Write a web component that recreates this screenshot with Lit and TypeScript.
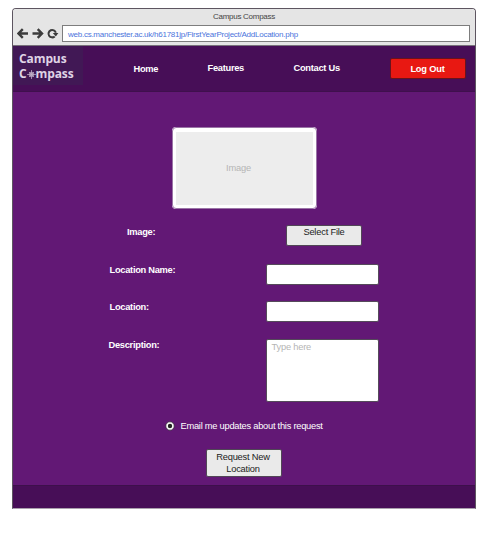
import { LitElement, html, css } from "lit";
import { customElement } from "lit/decorators.js";

@customElement("app-root")
export class AppRoot extends LitElement {
  static styles = css`
    :host {
      display: block;
      box-sizing: border-box;
      height: 540px;
      padding: 8px 24px 0 12px;
      background: #fff;
      font: 9.3px/12px "Liberation Sans", Arial, sans-serif;
      letter-spacing: -0.28px;
      color: #fff;
    }
    * { box-sizing: border-box; }
    .window {
      width: 464px;
      height: 501px;
      display: flex;
      flex-direction: column;
      border: 1px solid #5d5560;
      border-bottom-color: #aaa0ad;
      border-radius: 4px 4px 0 0;
      overflow: hidden;
    }
    .chrome {
      height: 37px;
      flex: none;
      background: #e5e5e5;
      border-bottom: 1px solid #77717a;
    }
    .title {
      height: 16px;
      text-align: center;
      font-size: 8px;
      line-height: 16px;
      letter-spacing: -0.27px;
      color: #444;
    }
    .bar { display: flex; padding-left: 4px; }
    .tools { width: 45px; height: 18px; display: block; }
    .url {
      width: 408px;
      height: 17px;
      padding-left: 5px;
      border: 1px solid #7d7d7d;
      background: #fff;
      color: #4b74dc;
      font-size: 8px;
      line-height: 17px;
      white-space: nowrap;
      letter-spacing: -0.25px;
    }
    .nav {
      height: 46px;
      flex: none;
      display: flex;
      background: #470e57;
      border-bottom: 1px solid #3f104d;
      font-weight: bold;
    }
    .logo {
      width: 70px;
      height: 39px;
      padding: 6px 0 0 6px;
      background: #411855;
      color: #dfd3e5;
      font: 700 12px/14.5px "Open Sans", "Noto Sans", sans-serif;
      letter-spacing: -0.1px;
      white-space: nowrap;
    }
    .logo-line { display: flex; align-items: center; height: 14.5px; }
    .rose { width: 9px; height: 9px; margin-top: 1px; }
    .link { padding-top: 17px; white-space: nowrap; }
    .home { width: 74px; margin-left: 50.5px; }
    .features { width: 86px; margin-top: -1px; }
    .contact { width: 96px; margin-top: -1px; }
    .logout {
      width: 76px;
      height: 21px;
      margin-top: 12px;
      border: 1px solid #69131d;
      border-radius: 2px;
      background: #e81812;
      text-align: center;
      line-height: 20px;
      letter-spacing: -0.2px;
    }
    .main {
      flex: 1;
      display: flex;
      flex-direction: column;
      background: #621875;
      padding-top: 35px;
    }
    .preview {
      width: 145px;
      height: 82px;
      margin-left: 158.5px;
      border: 4px solid #fff;
      border-top-width: 5px;
      outline: 1px solid #9a75a6;
      outline-offset: -1px;
      border-radius: 4px;
      background: #ededed;
      color: #b5b5b5;
      text-align: center;
      line-height: 73px;
      padding-right: 11px;
      letter-spacing: -0.15px;
    }
    .row { display: flex; }
    .label {
      width: 156px;
      font-weight: bold;
      white-space: nowrap;
    }
    .image-row { margin: 16px 0 0 114px; }
    .image-row .label { width: 159px; padding-top: 1px; }
    .name-row { margin: 18px 0 0 96.5px; }
    .place-row { margin: 16px 0 0 96.5px; }
    .text-row { margin: 17px 0 0 95.5px; }
    .text-row .label { width: 157px; }
    .button {
      width: 76px;
      height: 21px;
      border: 1px solid #514756;
      border-radius: 2px;
      background: #eaeaea;
      color: #222;
      text-align: center;
      line-height: 12px;
      letter-spacing: -0.2px;
    }
    .field {
      width: 113px;
      height: 21px;
      border: 1px solid #554a5a;
      border-radius: 2px;
      background: #fff;
    }
    .area { height: 63px; padding: 1px 5px; color: #b5b5b5; letter-spacing: -0.2px; }
    .option {
      display: flex;
      align-items: center;
      height: 12px;
      margin: 18px 0 0 152px;
    }
    .radio { width: 10px; height: 10px; margin-right: 5.5px; }
    .option-text { white-space: nowrap; letter-spacing: -0.25px; }
    .submit { height: 28px; margin: 17px 0 0 193px; padding-top: 1px; padding-right: 2px; }
    .footer {
      height: 23px;
      flex: none;
      background: #470e57;
      border-top: 1px solid #3d104b;
    }
  `;

  render() {
    return html`
      <div class="window">
        <div class="chrome">
          <div class="title">Campus Compass</div>
          <div class="bar">
            <svg class="tools" viewBox="0 0 45 18" fill="none" stroke="#3c3c3c" stroke-width="2.4">
              <path d="M11 8.5H2.5M5.8 4.2 1.5 8.5l4.3 4.3" />
              <path d="M15.5 8.5H24M20.7 4.2 25 8.5l-4.3 4.3" />
              <path d="M37.7 11.4A3.7 3.7 0 1 1 38.8 7.8" stroke-width="2" />
              <path d="M35.8 8h5.6l-2.6 3.6z" fill="#3c3c3c" stroke="none" />
            </svg>
            <div class="url">web.cs.manchester.ac.uk/h61781jp/FirstYearProject/AddLocation.php</div>
          </div>
        </div>
        <div class="nav">
          <div class="logo">
            <div class="logo-line">Campus</div>
            <div class="logo-line">C<svg class="rose" viewBox="0 0 9 9"><circle cx="4.5" cy="4.5" r="2.4" fill="#8d759c" stroke="#a995b5" stroke-width=".7" /><path d="M4.5 0v9M0 4.5h9M2 2l5 5M7 2 2 7" stroke="#c5b5cc" stroke-width=".7" /></svg>mpass</div>
          </div>
          <div class="link home">Home</div>
          <div class="link features">Features</div>
          <div class="link contact">Contact Us</div>
          <div class="logout">Log Out</div>
        </div>
        <div class="main">
          <div class="preview">Image</div>
          <div class="row image-row"><div class="label">Image:</div><div class="button">Select File</div></div>
          <div class="row name-row"><div class="label">Location Name:</div><div class="field"></div></div>
          <div class="row place-row"><div class="label">Location:</div><div class="field"></div></div>
          <div class="row text-row"><div class="label">Description:</div><div class="field area">Type here</div></div>
          <div class="option">
            <svg class="radio" viewBox="0 0 10 10"><circle cx="5" cy="5" r="4.2" fill="#fff" stroke="#37303a" stroke-width=".8" /><circle cx="5" cy="5" r="2.2" fill="#222" /></svg>
            <span class="option-text">Email me updates about this request</span>
          </div>
          <div class="button submit">Request New<br />Location</div>
        </div>
        <div class="footer"></div>
      </div>
    `;
  }
}
